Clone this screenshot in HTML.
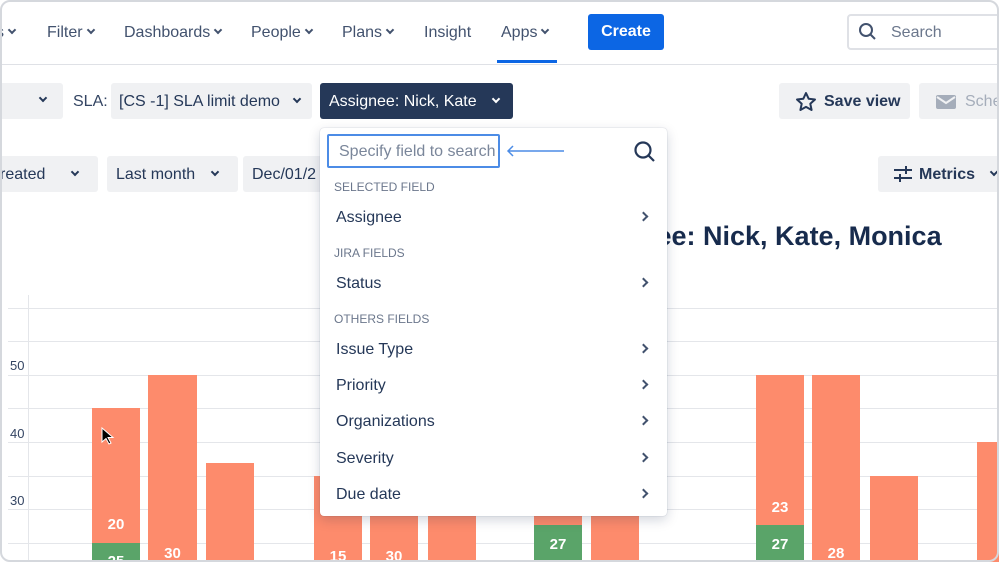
<!DOCTYPE html>
<html><head><style>
*{margin:0;padding:0;box-sizing:border-box}
body{width:999px;height:562px;overflow:hidden;background:#fff;font-family:"Liberation Sans",sans-serif;color:#344563;position:relative}
.a{position:absolute;white-space:nowrap}
.nav{font-size:16px;color:#42526e;top:24px}
.chev{display:inline-block;width:6px;height:6px;border-right:2px solid currentColor;border-bottom:2px solid currentColor;transform:rotate(45deg);margin-left:5px;vertical-align:4px}
.btn{background:#f0f1f3;border-radius:3px;height:36px;font-size:16px;color:#253858;line-height:36px}
.grid{position:absolute;left:8px;right:0;height:1px;background:#e4e6ea}
.bar{position:absolute;background:#fd8b6c}
.g{position:absolute;background:#5aa469}
.bl{position:absolute;color:#fff;font-size:15px;font-weight:bold;text-align:center}
.mi{position:absolute;left:336px;font-size:16px;color:#253858}
.ar{position:absolute;left:640px;width:7px;height:7px;border-right:2px solid #42526e;border-top:2px solid #42526e;transform:rotate(45deg)}
.hd{position:absolute;left:334px;font-size:12px;color:#6b778c}
</style></head><body>
<div class="a nav" style="left:-4px">s<span class="chev"></span></div>
<div class="a nav" style="left:47px">Filter<span class="chev"></span></div>
<div class="a nav" style="left:124px">Dashboards<span class="chev"></span></div>
<div class="a nav" style="left:251px">People<span class="chev"></span></div>
<div class="a nav" style="left:342px">Plans<span class="chev"></span></div>
<div class="a nav" style="left:424px">Insight</div>
<div class="a nav" style="left:501px">Apps<span class="chev"></span></div>
<div class="a" style="left:497px;top:60px;width:60px;height:3px;background:#0c66e4"></div>
<div class="a" style="left:588px;top:14px;width:76px;height:36px;background:#0c66e4;border-radius:3px;color:#fff;font-size:16px;font-weight:bold;text-align:center;line-height:36px">Create</div>
<div class="a" style="left:847px;top:14px;width:160px;height:36px;border:2px solid #dfe1e6;border-radius:4px"></div>
<svg class="a" style="left:858px;top:22px" width="20" height="20"><circle cx="8" cy="8" r="6" stroke="#42526e" stroke-width="2" fill="none"/><line x1="12.5" y1="12.5" x2="17" y2="17" stroke="#42526e" stroke-width="2"/></svg>
<div class="a" style="left:891px;top:24px;font-size:16px;color:#6b778c">Search</div>
<div class="a" style="left:0;top:64px;width:999px;height:1px;background:#dfe1e6"></div>

<div class="a btn" style="left:-5px;top:83px;width:68px;padding-left:40px"><span class="chev"></span></div>
<div class="a" style="left:73px;top:93px;font-size:16px">SLA:</div>
<div class="a btn" style="left:111px;top:83px;width:201px;padding-left:8px;line-height:37px">[CS -1] SLA limit demo <span class="chev" style="margin-left:10px"></span></div>
<div class="a btn" style="left:320px;top:83px;width:193px;padding-left:9px;background:#253858;color:#fff;line-height:37px">Assignee: Nick, Kate <span class="chev" style="margin-left:12px"></span></div>
<div class="a btn" style="left:779px;top:83px;width:131px;padding-left:45px;font-weight:bold;line-height:37px">Save view</div>
<svg class="a" style="left:795px;top:91px" width="22" height="22"><path d="M11 2l2.7 5.8 6.3.7-4.7 4.3 1.3 6.2L11 15.9 5.4 19l1.3-6.2L2 8.5l6.3-.7z" fill="none" stroke="#253858" stroke-width="2" stroke-linejoin="round"/></svg>
<div class="a btn" style="left:919px;top:83px;width:90px;padding-left:46px;color:#a5adba;line-height:37px">Sche</div>
<svg class="a" style="left:936px;top:94px" width="20" height="16"><rect x="0" y="1" width="20" height="14" rx="2" fill="#a5adba"/><path d="M1 3l9 6 9-6" stroke="#f0f1f3" stroke-width="2" fill="none"/></svg>

<div class="a btn" style="left:-10px;top:156px;width:108px;padding-left:10px;line-height:37px">reated <span class="chev" style="margin-left:22px"></span></div>
<div class="a btn" style="left:107px;top:156px;width:131px;padding-left:9px;line-height:37px">Last month <span class="chev" style="margin-left:12px"></span></div>
<div class="a btn" style="left:243px;top:156px;width:90px;padding-left:9px;line-height:37px">Dec/01/2</div>
<div class="a btn" style="left:878px;top:156px;width:130px;padding-left:41px;font-weight:bold;line-height:37px">Metrics <span class="chev" style="margin-left:12px"></span></div>
<svg class="a" style="left:893px;top:165px" width="20" height="18"><g stroke="#253858" stroke-width="2"><line x1="1" y1="5" x2="19" y2="5"/><line x1="1" y1="13" x2="19" y2="13"/><line x1="13" y1="1" x2="13" y2="9"/><line x1="7" y1="9" x2="7" y2="17"/></g></svg>

<div class="a" style="left:640px;top:221px;font-size:27px;font-weight:bold;color:#172b4d">nee: Nick, Kate, Monica</div>

<div class="a" style="left:28px;top:295px;width:1px;height:267px;background:#e4e6ea"></div>
<div class="grid" style="top:308px"></div><div class="grid" style="top:341px"></div><div class="grid" style="top:375px"></div><div class="grid" style="top:408px"></div><div class="grid" style="top:442px"></div><div class="grid" style="top:476px"></div><div class="grid" style="top:509px"></div><div class="grid" style="top:543px"></div>
<div class="a" style="left:10px;top:358px;font-size:13px">50</div>
<div class="a" style="left:10px;top:426px;font-size:13px">40</div>
<div class="a" style="left:10px;top:493px;font-size:13px">30</div>

<div class="bar" style="left:92px;top:408px;width:48px;height:154px"></div><div class="g" style="left:92px;top:543px;width:48px;height:19px"></div>
<div class="bl" style="left:92px;top:516px;width:48px">20</div><div class="bl" style="left:92px;top:553px;width:48px">25</div>
<div class="bar" style="left:148px;top:375px;width:49px;height:187px"></div><div class="bl" style="left:148px;top:545px;width:49px">30</div>
<div class="bar" style="left:206px;top:463px;width:48px;height:99px"></div>
<div class="bar" style="left:314px;top:476px;width:48px;height:86px"></div><div class="bl" style="left:314px;top:548px;width:48px">15</div>
<div class="bar" style="left:370px;top:500px;width:48px;height:62px"></div><div class="bl" style="left:370px;top:548px;width:48px">30</div>
<div class="bar" style="left:428px;top:500px;width:48px;height:62px"></div>
<div class="bar" style="left:534px;top:500px;width:48px;height:62px"></div><div class="g" style="left:534px;top:525px;width:48px;height:37px"></div><div class="bl" style="left:534px;top:536px;width:48px">27</div>
<div class="bar" style="left:591px;top:500px;width:48px;height:62px"></div>
<div class="bar" style="left:756px;top:375px;width:48px;height:187px"></div><div class="g" style="left:756px;top:525px;width:48px;height:37px"></div>
<div class="bl" style="left:756px;top:499px;width:48px">23</div><div class="bl" style="left:756px;top:536px;width:48px">27</div>
<div class="bar" style="left:812px;top:375px;width:48px;height:187px"></div><div class="bl" style="left:812px;top:545px;width:48px">28</div>
<div class="bar" style="left:870px;top:476px;width:48px;height:86px"></div>
<div class="bar" style="left:977px;top:442px;width:30px;height:120px"></div>
<svg class="a" style="left:101px;top:427px" width="14" height="18"><path d="M1 1v14l4-3.5 3 5.5 2-1-3-5.5h5z" fill="#000" stroke="#fff" stroke-width="1"/></svg>

<div class="a" style="left:320px;top:128px;width:347px;height:388px;background:#fff;border-radius:4px;box-shadow:0 4px 12px rgba(9,30,66,.18),0 0 1px rgba(9,30,66,.3)"></div>
<div class="a" style="left:327px;top:134px;width:173px;height:34px;border:2px solid #4c8ce6;border-radius:2px;font-size:16px;color:#7a869a;padding:7px 0 0 10px">Specify field to search</div>
<svg class="a" style="left:506px;top:145px" width="60" height="12"><path d="M2 6h56M7 1L2 6l5 5" stroke="#4c8ce6" stroke-width="1.5" fill="none"/></svg>
<svg class="a" style="left:633px;top:140px" width="24" height="24"><circle cx="10" cy="10" r="7.5" stroke="#253858" stroke-width="2.2" fill="none"/><line x1="15.5" y1="15.5" x2="21" y2="21" stroke="#253858" stroke-width="2.2"/></svg>
<div class="hd" style="top:180px">SELECTED FIELD</div>
<div class="mi" style="top:209px">Assignee</div><div class="ar" style="top:213px"></div>
<div class="hd" style="top:246px">JIRA FIELDS</div>
<div class="mi" style="top:275px">Status</div><div class="ar" style="top:279px"></div>
<div class="hd" style="top:312px">OTHERS FIELDS</div>
<div class="mi" style="top:341px">Issue Type</div><div class="ar" style="top:345px"></div>
<div class="mi" style="top:377px">Priority</div><div class="ar" style="top:381px"></div>
<div class="mi" style="top:413px">Organizations</div><div class="ar" style="top:417px"></div>
<div class="mi" style="top:450px">Severity</div><div class="ar" style="top:454px"></div>
<div class="mi" style="top:486px">Due date</div><div class="ar" style="top:490px"></div>

<div class="a" style="left:0;top:0;width:999px;height:562px;border:2px solid #d5d8dd;border-radius:10px;pointer-events:none"></div>
</body></html>
